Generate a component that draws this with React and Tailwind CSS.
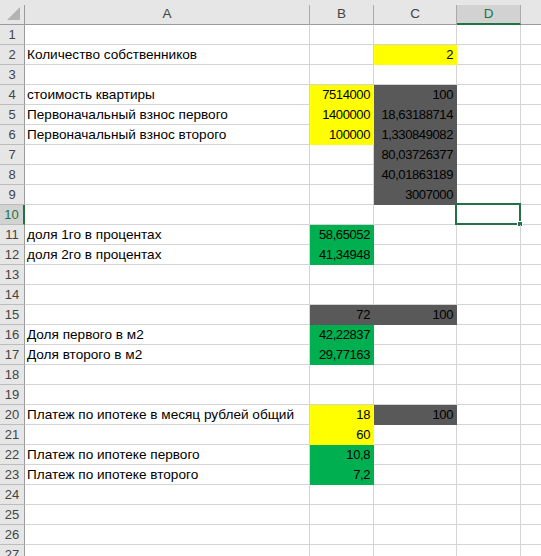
import React from "react";

const Y = "bg-[#ffff00] border-r-[#ffff00] border-b-[#ffff00]";
const G = "bg-[#595959] border-r-[#595959] border-b-[#595959]";
const N = "bg-[#00b050] border-r-[#00b050] border-b-[#00b050]";

const rows = {
  2: { A: "Количество собственников", C: ["2", Y] },
  4: { A: "стоимость квартиры", B: ["7514000", Y], C: ["100", G] },
  5: { A: "Первоначальный взнос первого", B: ["1400000", Y], C: ["18,63188714", G] },
  6: { A: "Первоначальный взнос второго", B: ["100000", Y], C: ["1,330849082", G] },
  7: { C: ["80,03726377", G] },
  8: { C: ["40,01863189", G] },
  9: { C: ["3007000", G] },
  11: { A: "доля 1го в процентах", B: ["58,65052", N] },
  12: { A: "доля 2го в процентах", B: ["41,34948", N] },
  15: { B: ["72", G], C: ["100", G] },
  16: { A: "Доля первого в м2", B: ["42,22837", N] },
  17: { A: "Доля второго в м2", B: ["29,77163", N] },
  20: { A: "Платеж по ипотеке в месяц рублей общий", B: ["18", Y], C: ["100", G] },
  21: { B: ["60", Y] },
  22: { A: "Платеж по ипотеке первого", B: ["10,8", N] },
  23: { A: "Платеж по ипотеке второго", B: ["7,2", N] },
};

const cell = "h-[20px] border-r border-b border-[#d4d4d4] leading-[20px] whitespace-nowrap overflow-hidden";

function NumCell({ v }) {
  if (!v) return <div className={cell} />;
  return (
    <div className={`${cell} ${v[1]} text-right pr-[3px] text-black text-[13px] tracking-[-0.4px]`}>
      {v[0]}
    </div>
  );
}

export default function App() {
  const list = Array.from({ length: 27 }, (_, i) => i + 1);
  return (
    <div
      className="w-[541px] h-[556px] overflow-hidden bg-white text-[13px] text-black"
      style={{ fontFamily: '"Liberation Sans", Arial, sans-serif' }}
    >
      <div className="grid grid-cols-[25px_285px_64px_83px_64px_1fr] h-[25px] bg-[#e6e6e6] text-[#444]">
        <div className="mt-[5px] h-[20px] border-r border-b border-[#9b9b9b] relative">
          <svg className="absolute left-[7px] top-[2px]" width="14" height="14" viewBox="0 0 14 14">
            <polygon points="13,0 13,13 0,13" fill="#b4b4b4" />
          </svg>
        </div>
        <div className="mt-[5px] h-[20px] border-r border-b border-r-[#ababab] border-b-[#9b9b9b] flex items-center justify-center text-[13.5px]">A</div>
        <div className="mt-[5px] h-[20px] border-r border-b border-r-[#ababab] border-b-[#9b9b9b] flex items-center justify-center text-[13.5px]">B</div>
        <div className="mt-[5px] h-[20px] border-r border-b border-r-[#ababab] border-b-[#9b9b9b] flex items-center justify-center text-[13.5px]">C</div>
        <div className="mt-[5px] h-[20px] border-r border-b-2 border-r-[#ababab] border-b-[#217346] bg-[#d2d2d2] text-[#217346] flex items-center justify-center pt-[1px] text-[13.5px]">D</div>
        <div className="mt-[5px] h-[20px] border-b border-b-[#9b9b9b]" />
      </div>
      <div className="grid grid-cols-[25px_285px_64px_83px_64px_1fr]">
        {list.map((r) => {
          const d = rows[r] || {};
          const sel = r === 10;
          return (
            <React.Fragment key={r}>
              <div
                className={
                  sel
                    ? "h-[20px] border-r-2 border-b border-r-[#217346] border-b-[#bcbcbc] bg-[#d2d2d2] text-[#217346] text-center leading-[20px]"
                    : "h-[20px] border-r border-b border-r-[#9b9b9b] border-b-[#bcbcbc] bg-[#e6e6e6] text-[#444] text-center leading-[20px]"
                }
              >
                {r}
              </div>
              <div className={`${cell} pl-[2px] text-[13.6px]`}>{d.A || ""}</div>
              <NumCell v={d.B} />
              <NumCell v={d.C} />
              <div className={`${cell} relative overflow-visible`}>
                {sel && (
                  <>
                    <div className="absolute -left-[2px] -top-[2px] -right-[1px] -bottom-[1px] border-2 border-[#217346]" />
                    <div className="absolute -right-[3px] -bottom-[3px] w-[6px] h-[6px] bg-[#217346] border border-white" />
                  </>
                )}
              </div>
              <div className="h-[20px] border-b border-[#d4d4d4]" />
            </React.Fragment>
          );
        })}
      </div>
    </div>
  );
}
